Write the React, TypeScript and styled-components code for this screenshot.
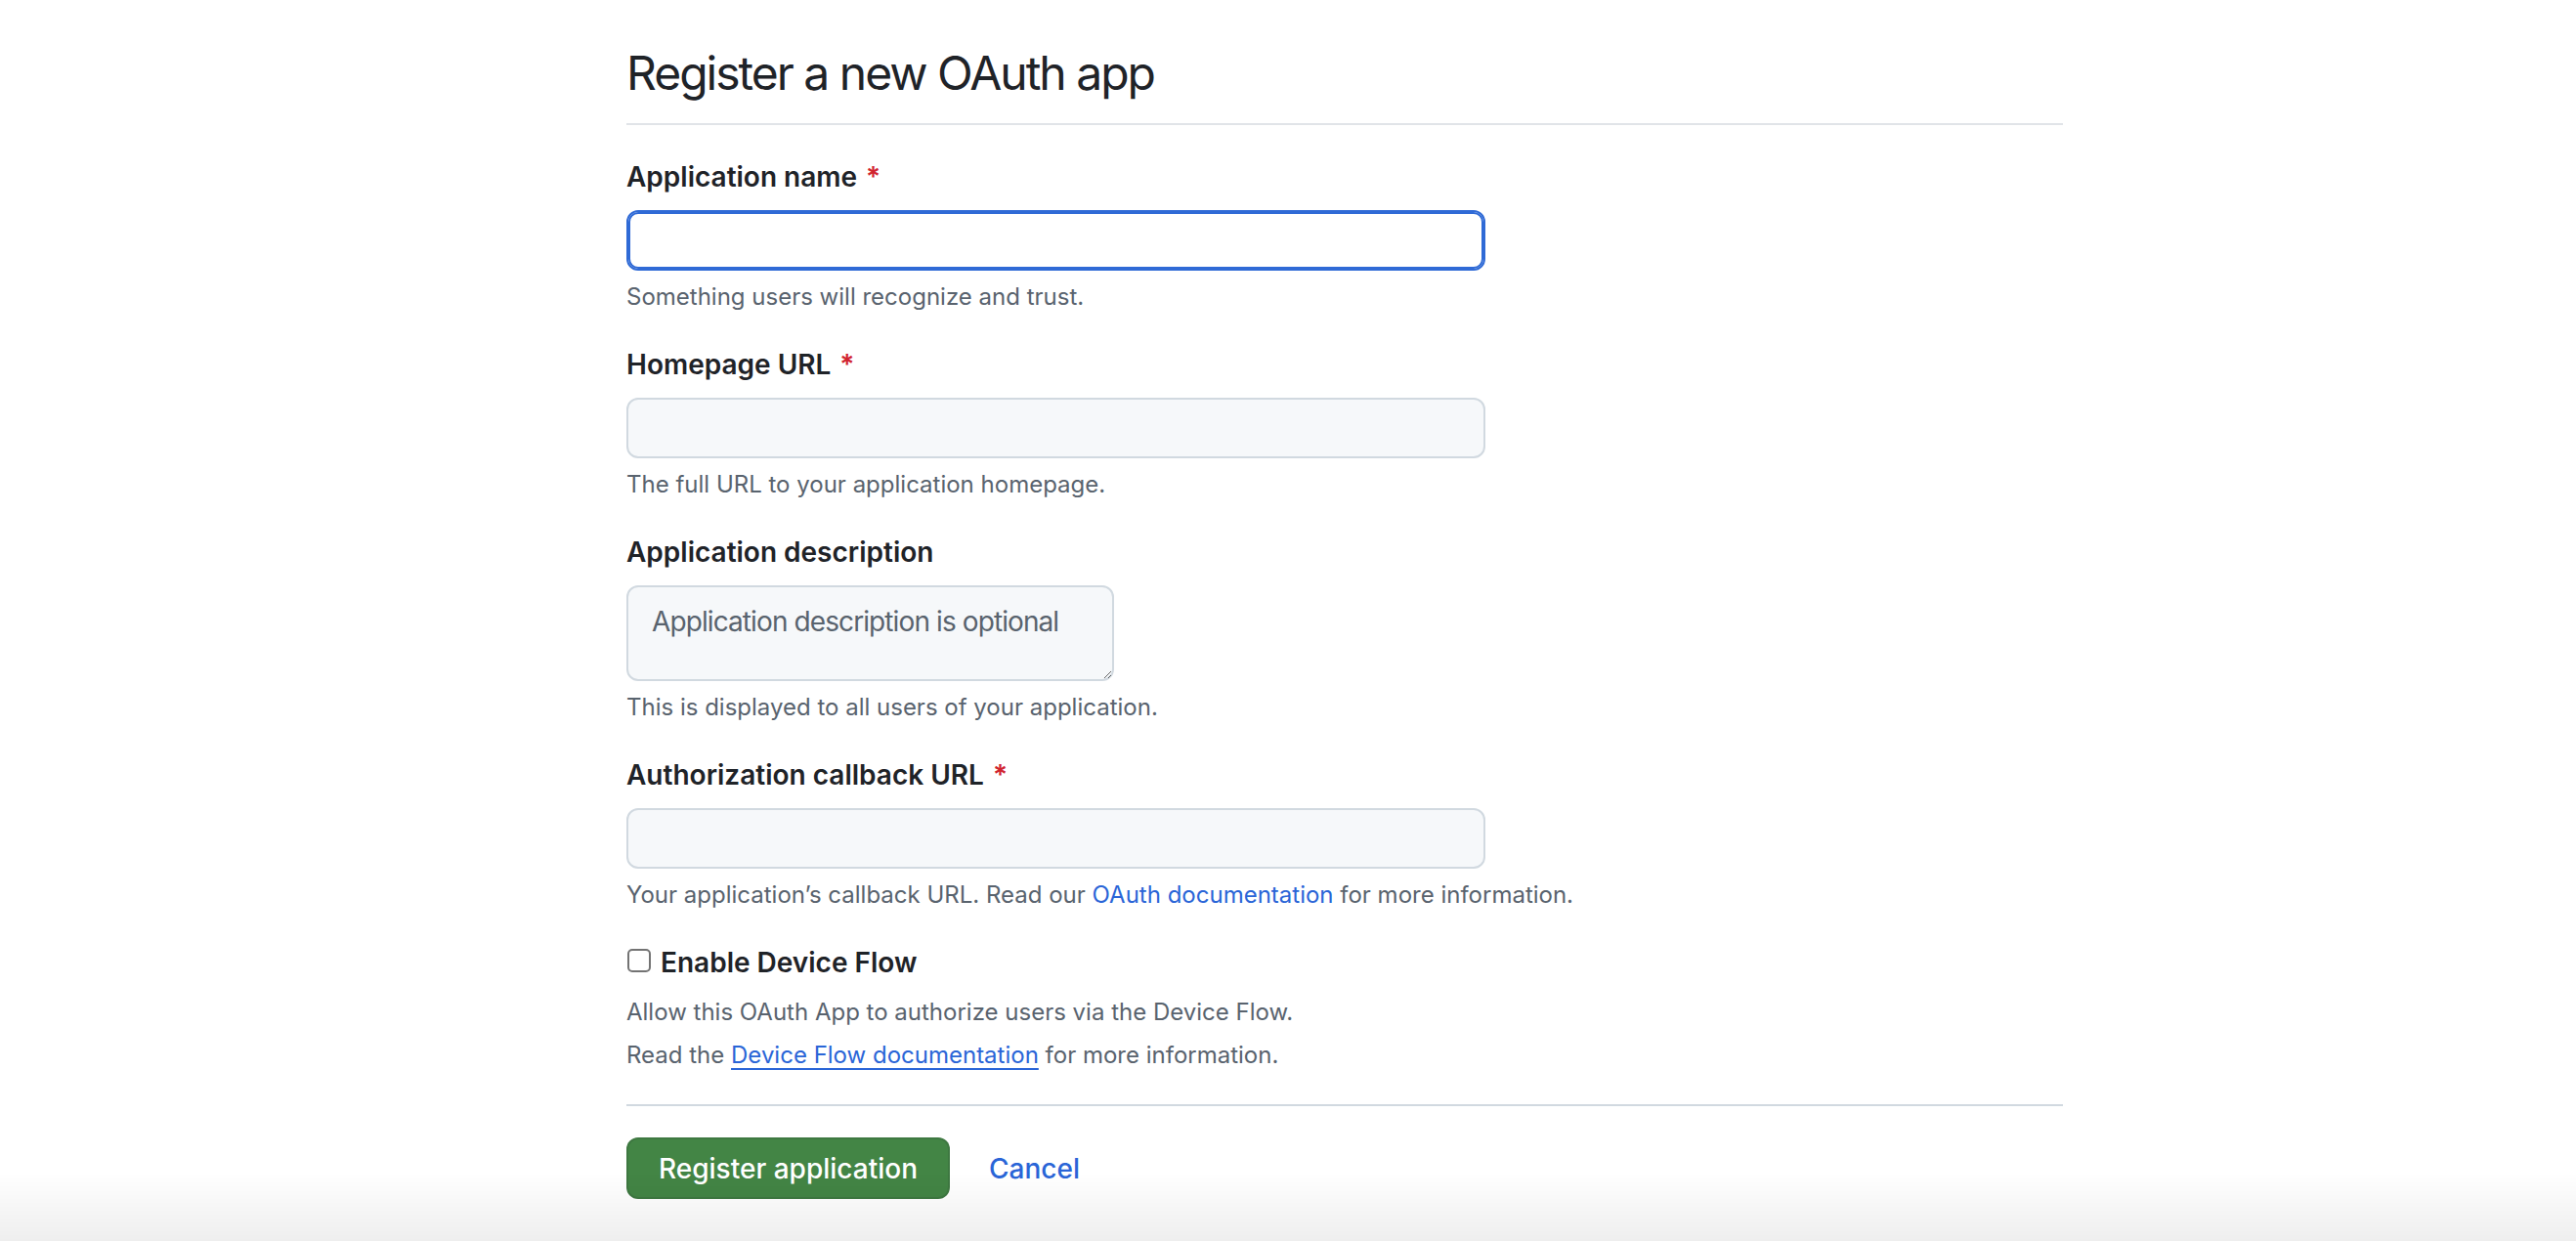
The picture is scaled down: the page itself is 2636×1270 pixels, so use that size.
import React from "react";
import styled, { createGlobalStyle } from "styled-components";

const GlobalStyle = createGlobalStyle`
	html,
	body {
		margin: 0;
		background: #ffffff;
	}

	body {
		color: #1f2328;
		font-family: Inter, "Liberation Sans", sans-serif;
	}
`;

const Page = styled("div")`
	box-sizing: border-box;
	min-height: 1270px;
	padding: 39px 0 0 641px;
`;

const Main = styled("main")`
	width: 1470px;
`;

const Subhead = styled("div")`
	border-bottom: 2px solid #e1e4e8;
	padding-bottom: 15px;
`;

const Heading = styled("h1")`
	font-size: 48px;
	font-weight: 400;
	letter-spacing: -2px;
	line-height: 72px;
	margin: 0;
`;

const Form = styled("form")`
	display: flex;
	flex-direction: column;
	padding-top: 32px;
`;

const Group = styled("div")`
	display: flex;
	flex-direction: column;
	align-items: flex-start;

	& + & {
		margin-top: 30px;
	}
`;

const Label = styled("label")`
	display: block;
	font-size: 28px;
	font-weight: 600;
	line-height: 42px;
`;

const Required = styled("span")`
	color: #d1242f;
	margin-left: 9px;
`;

const TextInput = styled("input")<{ $focused?: boolean }>`
	background: ${({ $focused }): string => ($focused ? "#ffffff" : "#f6f8fa")};
	border: 2px solid ${({ $focused }): string => ($focused ? "#2f6ad6" : "#d1d9e0")};
	border-radius: 12px;
	box-shadow: ${({ $focused }): string =>
		$focused ? "inset 0 0 0 2px #2f6ad6" : "none"};
	box-sizing: border-box;
	color: #1f2328;
	font-family: inherit;
	font-size: 28px;
	height: 62px;
	margin-top: 13px;
	outline: none;
	padding: 0 24px;
	width: 879px;
`;

const TextArea = styled("textarea")`
	background: #f6f8fa;
	border: 2px solid #d1d9e0;
	border-radius: 12px;
	box-sizing: border-box;
	color: #1f2328;
	font-family: inherit;
	font-size: 28px;
	height: 98px;
	letter-spacing: -0.9px;
	line-height: 42px;
	margin-top: 13px;
	outline: none;
	padding: 14px 20px 14px 24px;
	width: 499px;

	&::placeholder {
		color: #59636e;
	}
`;

const Note = styled("p")<{ $space?: number }>`
	color: #59636e;
	font-size: 24px;
	line-height: 36px;
	margin: ${({ $space }): string => `${$space ?? 9}px`} 0 0;
`;

const DocLink = styled("a")<{ $underline?: boolean }>`
	color: #2a65d7;
	text-decoration: ${({ $underline }): string =>
		$underline ? "underline" : "none"};
	text-decoration-thickness: 2px;
	text-underline-offset: 5px;
`;

const CheckRow = styled("div")`
	align-items: flex-start;
	display: flex;
	margin-top: 30px;
`;

const Checkbox = styled("input")`
	appearance: none;
	background: #ffffff;
	border: 2px solid #737373;
	border-radius: 5px;
	box-sizing: border-box;
	height: 24px;
	margin: 7px 10px 0 1px;
	width: 24px;
`;

const Divider = styled("hr")`
	border: 0;
	border-top: 2px solid #d1d9e0;
	margin: 32px 0 0;
`;

const Actions = styled("div")`
	align-items: center;
	display: flex;
	gap: 40px;
	margin-top: 32px;
`;

const PrimaryButton = styled("button")`
	background: #438545;
	border: 2px solid rgba(31, 35, 40, 0.12);
	border-radius: 12px;
	color: #ffffff;
	font-family: inherit;
	font-size: 28px;
	font-weight: 500;
	height: 63px;
	padding: 0 31px;
`;

const CancelLink = styled("a")`
	color: #2a65d7;
	font-size: 28px;
	font-weight: 500;
	text-decoration: none;
`;

const BottomFade = styled("div")`
	background: linear-gradient(to bottom, rgba(0, 0, 0, 0), rgba(0, 0, 0, 0.065));
	bottom: 0;
	height: 70px;
	left: 0;
	pointer-events: none;
	position: fixed;
	right: 0;
`;

interface FieldProps {
	id: string;
	label: string;
	note: React.ReactNode;
	required?: boolean;
	focused?: boolean;
}

const Field = ({ id, label, note, required, focused }: FieldProps): React.ReactElement => (
	<Group>
		<Label htmlFor={id}>
			{label}
			{required && <Required>*</Required>}
		</Label>
		<TextInput id={id} type="text" $focused={focused} />
		<Note>{note}</Note>
	</Group>
);

export default function App(): React.ReactElement {
	return (
		<>
			<GlobalStyle />
			<Page>
				<Main>
					<Subhead>
						<Heading>Register a new OAuth app</Heading>
					</Subhead>

					<Form onSubmit={e => e.preventDefault()}>
						<Field
							id="app-name"
							label="Application name"
							note="Something users will recognize and trust."
							required
							focused
						/>
						<Field
							id="homepage-url"
							label="Homepage URL"
							note="The full URL to your application homepage."
							required
						/>
						<Group>
							<Label htmlFor="app-description">Application description</Label>
							<TextArea
								id="app-description"
								placeholder="Application description is optional"
							/>
							<Note>This is displayed to all users of your application.</Note>
						</Group>
						<Field
							id="callback-url"
							label="Authorization callback URL"
							note={
								<>
									Your application’s callback URL. Read our{" "}
									<DocLink href="#">OAuth documentation</DocLink> for more
									information.
								</>
							}
							required
						/>

						<CheckRow>
							<Checkbox id="device-flow" type="checkbox" />
							<Label htmlFor="device-flow">Enable Device Flow</Label>
						</CheckRow>
						<Note $space={12}>
							Allow this OAuth App to authorize users via the Device Flow.
						</Note>
						<Note $space={8}>
							Read the{" "}
							<DocLink href="#" $underline>
								Device Flow documentation
							</DocLink>{" "}
							for more information.
						</Note>

						<Divider />

						<Actions>
							<PrimaryButton type="submit">Register application</PrimaryButton>
							<CancelLink href="#">Cancel</CancelLink>
						</Actions>
					</Form>
				</Main>
			</Page>
			<BottomFade />
		</>
	);
}
